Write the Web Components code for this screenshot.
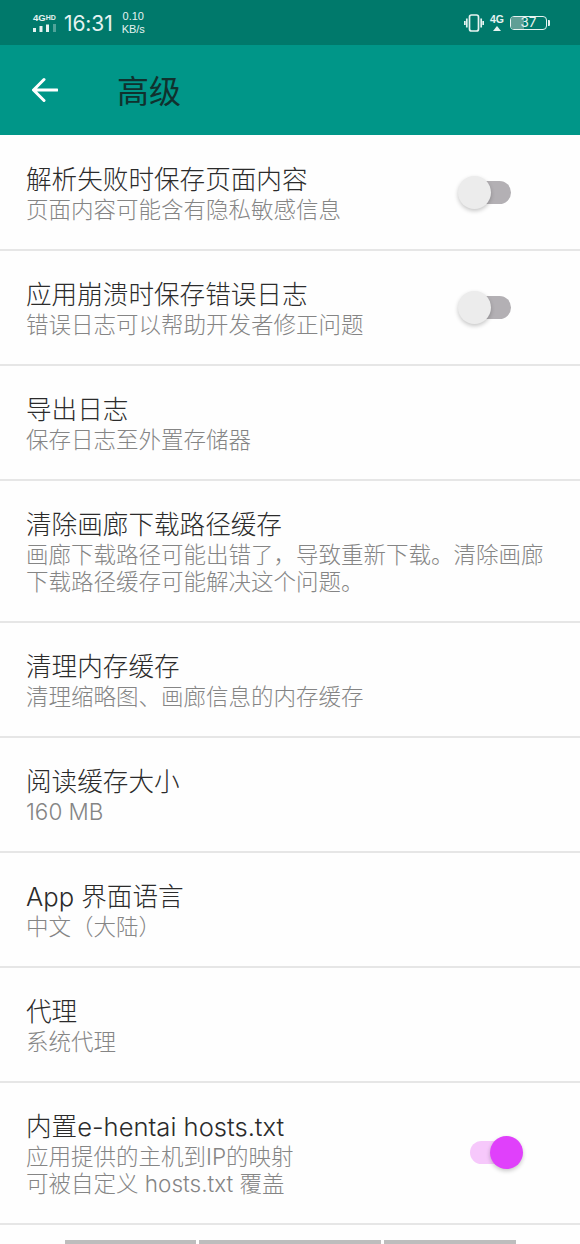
<!DOCTYPE html>
<html lang="zh">
<head>
<meta charset="utf-8">
<title>高级</title>
<style>
  html, body { margin: 0; padding: 0; background: #fefefe; }
  body { width: 580px; height: 1244px; overflow: hidden; display: flex; flex-direction: column; font-family: "Inter", "Noto Sans CJK SC", sans-serif; }
</style>
</head>
<body>
<status-bar></status-bar>
<app-bar title="高级"></app-bar>
<pref-list>
  <pref-row title="解析失败时保存页面内容" summary="页面内容可能含有隐私敏感信息"><pref-switch></pref-switch></pref-row>
  <pref-row title="应用崩溃时保存错误日志" summary="错误日志可以帮助开发者修正问题"><pref-switch></pref-switch></pref-row>
  <pref-row title="导出日志" summary="保存日志至外置存储器"></pref-row>
  <pref-row title="清除画廊下载路径缓存" summary="画廊下载路径可能出错了，导致重新下载。清除画廊下载路径缓存可能解决这个问题。"></pref-row>
  <pref-row title="清理内存缓存" summary="清理缩略图、画廊信息的内存缓存"></pref-row>
  <pref-row title="阅读缓存大小" summary="160 MB"></pref-row>
  <pref-row title="App 界面语言" summary="中文（大陆）"></pref-row>
  <pref-row title="代理" summary="系统代理"></pref-row>
  <pref-row title="内置e-hentai hosts.txt" summary="应用提供的主机到IP的映射&#10;可被自定义 hosts.txt 覆盖"><pref-switch checked></pref-switch></pref-row>
</pref-list>
<gesture-bar></gesture-bar>

<script>
class StatusBar extends HTMLElement {
  constructor() {
    super()
    this.attachShadow({ mode: 'open' }).innerHTML = `
    <style>
      :host { display: flex; flex: none; height: 45px; box-sizing: border-box; padding: 0 30px 0 33px; align-items: center; background: #00796b; color: #e6f3f1; font-family: "Inter", "Liberation Sans", sans-serif; }
      .signal { display: flex; flex-direction: column; width: 25px; gap: 2px; margin-right: 6px; }
      .tag { font: bold 9.500px/8px "Liberation Sans", sans-serif; white-space: nowrap; }
      .tag small { font-size: 7px; vertical-align: 1px; }
      .time { font-size: 21px; font-weight: 400; letter-spacing: -.1px; margin-top: 2px; }
      .speed { font: 11px/13px "Liberation Sans", sans-serif; text-align: center; margin-left: 9px; }
      .right { margin-left: auto; display: flex; align-items: center; }
      .net { display: flex; flex-direction: column; align-items: center; width: 14px; margin: 0 6px; font: bold 10.500px/11px "Liberation Sans", sans-serif; }
      .net svg { margin-top: 1px; }
      .battery { position: relative; display: flex; width: 37px; height: 14px; box-sizing: border-box; border: 1.500px solid #e6f3f1; border-radius: 4px; font-size: 13.500px; line-height: 11px; justify-content: center; }
      .fill { position: absolute; left: 0; top: 0; bottom: 0; width: 37%; border-radius: 2px 0 0 2px; background: #5f9f95; }
      .battery span { position: relative; }
      .cap { width: 2px; height: 6px; margin-left: 1px; background: #e6f3f1; border-radius: 0 1px 1px 0; }
    </style>
    <div class="signal">
      <div class="tag">4G<small>HD</small></div>
      <svg width="24" height="8" viewBox="0 0 24 8" fill="#e6f3f1"><rect x="0" y="4" width="3" height="4"/><rect x="6.500" y="2" width="3" height="6"/><rect x="13" y="0.500" width="3" height="7.500"/><rect x="20" y="0" width="3" height="8" opacity=".35"/></svg>
    </div>
    <div class="time">16:31</div>
    <div class="speed">0.10<br>KB/s</div>
    <div class="right">
      <svg width="20" height="18" viewBox="0 0 20 18" fill="none" stroke="#e6f3f1" stroke-width="1.700"><rect x="5.500" y="1" width="9" height="16" rx="2"/><path d="M2.800 4.500v9M17.200 4.500v9M.8 7v4M19.200 7v4"/></svg>
      <div class="net">4G<svg width="14" height="5" viewBox="0 0 14 5"><path d="M7 0L11 5H3z" fill="#e6f3f1"/></svg></div>
      <div class="battery"><div class="fill"></div><span>37</span></div>
      <div class="cap"></div>
    </div>`
  }
}

class AppBar extends HTMLElement {
  constructor() {
    super()
    this.attachShadow({ mode: 'open' }).innerHTML = `
    <style>
      :host { display: flex; flex: none; height: 90px; align-items: center; background: #009688; padding-left: 32px; }
      svg { flex: none; width: 26px; height: 26px; }
      h1 { margin: -2px 0 0 59px; font: 400 32px/40px "Noto Sans CJK SC", sans-serif; color: #10312e; }
    </style>
    <svg viewBox="0 0 26 26" fill="none" stroke="#fff" stroke-width="3" stroke-linecap="round" stroke-linejoin="round"><path d="M25 13H2M12 2.500L1.500 13 12 23.500"/></svg>
    <h1>${this.getAttribute('title')}</h1>`
  }
}

class PrefList extends HTMLElement {
  constructor() {
    super()
    this.attachShadow({ mode: 'open' }).innerHTML = `
    <style>:host { display: block; flex: none; padding-top: 1px; }</style>
    <slot></slot>`
  }
}

class PrefRow extends HTMLElement {
  constructor() {
    super()
    this.attachShadow({ mode: 'open' }).innerHTML = `
    <style>
      :host { display: flex; align-items: center; box-sizing: border-box; padding: 28px 57px 26px 26px; border-bottom: 2px solid #e6e6e6; font-family: "Inter", "Noto Sans CJK SC", sans-serif; font-weight: 300; }
      :host(.plain) { padding-right: 30px; }
      .text { flex: 1; min-width: 0; }
      .title { font-size: 25.600px; line-height: 32px; color: #2b2b2b; }
      .summary { font-size: 22.500px; line-height: 27px; color: #858585; white-space: pre-line; }
    </style>
    <div class="text">
      <div class="title">${this.getAttribute('title')}</div>
      <div class="summary">${this.getAttribute('summary')}</div>
    </div>
    <slot></slot>`
  }
  connectedCallback() {
    // rows without a switch get the full width for their text
    if (!this.querySelector('pref-switch')) this.classList.add('plain')
  }
}

class PrefSwitch extends HTMLElement {
  constructor() {
    super()
    const on = this.hasAttribute('checked')
    this.attachShadow({ mode: 'open' }).innerHTML = `
    <style>
      :host { display: block; position: relative; flex: none; width: 53px; height: 34px; margin: -4px ${on ? 0 : 12}px 0 0; }
      .track { position: absolute; left: ${on ? 0 : 7}px; top: 6px; width: 46px; height: 23px; border-radius: 12px; background: ${on ? '#f6c8fb' : '#b3b0b4'}; }
      .thumb { position: absolute; left: ${on ? 20 : 0}px; top: 1px; width: 33px; height: 33px; border-radius: 50%; background: ${on ? '#e040fb' : '#ececec'}; box-shadow: 0 2px 4px rgba(0,0,0,.22); }
    </style>
    <div class="track"></div>
    <div class="thumb"></div>`
  }
}

class GestureBar extends HTMLElement {
  constructor() {
    super()
    this.attachShadow({ mode: 'open' }).innerHTML = `
    <style>
      :host { display: flex; flex: none; margin-top: auto; height: 4px; gap: 3px; justify-content: center; }
      div { height: 4px; background: #bdbdbd; }
    </style>
    <div style="width:131px"></div>
    <div style="width:182px"></div>
    <div style="width:132px"></div>`
  }
}

customElements.define('status-bar', StatusBar)
customElements.define('app-bar', AppBar)
customElements.define('pref-list', PrefList)
customElements.define('pref-row', PrefRow)
customElements.define('pref-switch', PrefSwitch)
customElements.define('gesture-bar', GestureBar)
</script>
</body>
</html>
